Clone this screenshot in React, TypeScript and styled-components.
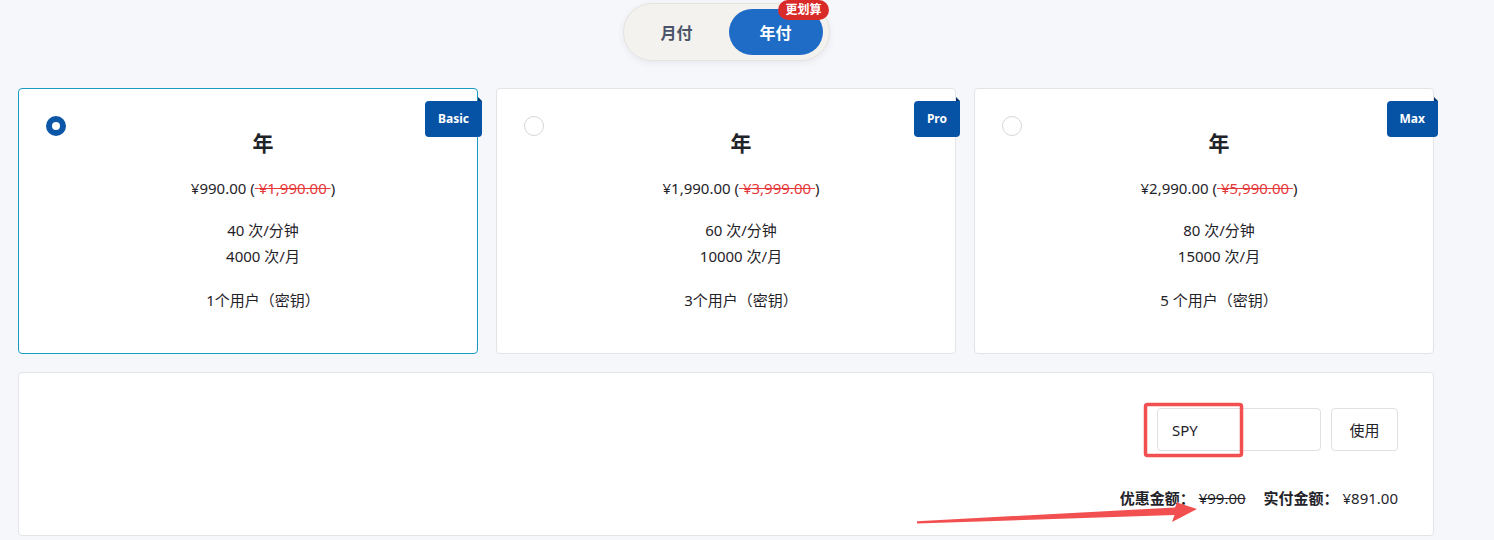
import React, { useState } from 'react';
import styled, { createGlobalStyle } from 'styled-components';

const GlobalStyle = createGlobalStyle`
  body {
    margin: 0;
    background: #f6f7fa;
    font-family: "Noto Sans", "Noto Sans CJK SC", sans-serif;
    color: #1f2329;
  }
`;

const Page = styled.div`
  position: relative;
  padding: 3px 60px 0 18px;
  width: 1416px;
`;

const ToggleRow = styled.div`
  display: flex;
  justify-content: center;
`;

const Toggle = styled.div`
  display: flex;
  gap: 5px;
  padding: 5px 6px;
  background: #f4f2ef;
  border: 1px solid #e6e3df;
  border-radius: 29px;
  box-shadow: 0 2px 6px rgba(40, 60, 120, 0.08);
`;

const ToggleButton = styled.button<{ $active?: boolean }>`
  position: relative;
  width: 94px;
  height: 46px;
  border: none;
  border-radius: 23px;
  font-family: inherit;
  font-size: 16px;
  font-weight: 700;
  cursor: pointer;
  background: ${(p) => (p.$active ? '#1f6cc6' : 'transparent')};
  color: ${(p) => (p.$active ? '#ffffff' : '#4a5468')};
`;

const Hot = styled.span`
  position: absolute;
  top: -9px;
  right: -6px;
  padding: 0 7px;
  height: 20px;
  line-height: 20px;
  border-radius: 10px;
  background: #d92a2a;
  color: #fff;
  font-size: 12px;
  font-weight: 700;
`;

const Cards = styled.div`
  display: grid;
  grid-template-columns: repeat(3, 1fr);
  gap: 18px;
  margin-top: 27px;
`;

const Card = styled.div<{ $selected?: boolean }>`
  position: relative;
  height: 266px;
  box-sizing: border-box;
  padding: 39px 0 0 30px;
  background: #fff;
  border: 1px solid ${(p) => (p.$selected ? '#1a9cc0' : '#e2e4e8')};
  border-radius: 4px;
  text-align: center;
  cursor: pointer;
`;

const Radio = styled.span<{ $checked?: boolean }>`
  position: absolute;
  left: 27px;
  top: 27px;
  width: 20px;
  height: 20px;
  box-sizing: border-box;
  border-radius: 50%;
  border: ${(p) => (p.$checked ? '6px solid #0b56a6' : '1px solid #d4d7dc')};
  background: #fff;
`;

const Ribbon = styled.span`
  position: absolute;
  top: 12px;
  right: -5px;
  padding: 0 13px;
  height: 36px;
  line-height: 36px;
  background: #0653a5;
  color: #fff;
  font-size: 12px;
  font-weight: 700;
  border-radius: 4px 0 4px 4px;

  &::before {
    content: '';
    position: absolute;
    top: -4px;
    right: 0;
    border-left: 4px solid #03356c;
    border-top: 4px solid transparent;
  }
`;

const Title = styled.div`
  font-size: 21px;
  font-weight: 700;
  line-height: 30px;
`;

const Price = styled.div`
  margin-top: 19px;
  font-size: 15px;
  line-height: 22px;
`;

const Old = styled.span`
  color: #e5393b;
  text-decoration: line-through;
`;

const Lines = styled.div`
  margin-top: 18px;
  font-size: 15px;
  line-height: 26px;
`;

const Panel = styled.div`
  margin-top: 18px;
  height: 164px;
  box-sizing: border-box;
  padding: 35px 35px 0;
  background: #fff;
  border: 1px solid #e2e4e8;
  border-radius: 4px;
  display: flex;
  flex-direction: column;
  align-items: flex-end;
`;

const CouponRow = styled.div`
  display: flex;
  gap: 10px;
`;

const CouponInput = styled.input`
  width: 164px;
  height: 43px;
  box-sizing: border-box;
  padding: 0 14px;
  border: 1px solid #dfe1e5;
  border-radius: 4px;
  font-family: inherit;
  font-size: 15px;
  color: #1f2329;
  outline: none;
`;

const UseButton = styled.button`
  width: 67px;
  height: 43px;
  border: 1px solid #dfe1e5;
  border-radius: 4px;
  background: #fff;
  font-family: inherit;
  font-size: 15px;
  color: #1f2329;
`;

const Summary = styled.div`
  display: flex;
  gap: 18px;
  margin-top: 37px;
  font-size: 15px;
  line-height: 20px;
`;

const Label = styled.b`
  font-weight: 700;
`;

const Struck = styled.span`
  text-decoration: line-through;
`;

const Annotations = styled.svg`
  position: absolute;
  left: 0;
  top: 0;
  width: 1494px;
  height: 540px;
  pointer-events: none;
`;

const plans = [
  { tag: 'Basic', price: '¥990.00', old: '¥1,990.00', rate: 40, month: 4000, users: '1个用户（密钥）' },
  { tag: 'Pro', price: '¥1,990.00', old: '¥3,999.00', rate: 60, month: 10000, users: '3个用户（密钥）' },
  { tag: 'Max', price: '¥2,990.00', old: '¥5,990.00', rate: 80, month: 15000, users: '5 个用户（密钥）' },
];

function App() {
  const [yearly, setYearly] = useState(true);
  const [selected, setSelected] = useState(0);
  const [code, setCode] = useState('SPY');

  return (
    <>
      <GlobalStyle />
      <Page>
        <ToggleRow>
          <Toggle>
            <ToggleButton $active={!yearly} onClick={() => setYearly(false)}>月付</ToggleButton>
            <ToggleButton $active={yearly} onClick={() => setYearly(true)}>
              年付
              <Hot>更划算</Hot>
            </ToggleButton>
          </Toggle>
        </ToggleRow>

        <Cards>
          {plans.map((p, i) => (
            <Card key={p.tag} $selected={selected === i} onClick={() => setSelected(i)}>
              <Radio $checked={selected === i} />
              <Ribbon>{p.tag}</Ribbon>
              <Title>{yearly ? '年' : '月'}</Title>
              <Price>
                {p.price} (<Old> {p.old} </Old>)
              </Price>
              <Lines>
                <div>{p.rate} 次/分钟</div>
                <div>{p.month} 次/月</div>
              </Lines>
              <Lines>{p.users}</Lines>
            </Card>
          ))}
        </Cards>

        <Panel>
          <CouponRow>
            <CouponInput value={code} onChange={(e) => setCode(e.target.value)} />
            <UseButton>使用</UseButton>
          </CouponRow>
          <Summary>
            <span>
              <Label>优惠金额：</Label> <Struck>¥99.00</Struck>
            </span>
            <span>
              <Label>实付金额：</Label> ¥891.00
            </span>
          </Summary>
        </Panel>

        {/* screenshot markup: highlight box + arrow */}
        <Annotations viewBox="0 0 1494 540">
          <rect x="1145.5" y="404.5" width="96" height="51" rx="2" fill="none" stroke="#f25050" strokeWidth="3.5" />
          <polygon
            points="917,521.2 1175,507.5 1177,502.5 1197,509 1172,522 1174.5,515 917,523.6"
            fill="#f25050"
          />
        </Annotations>
      </Page>
    </>
  );
}

export default App;
